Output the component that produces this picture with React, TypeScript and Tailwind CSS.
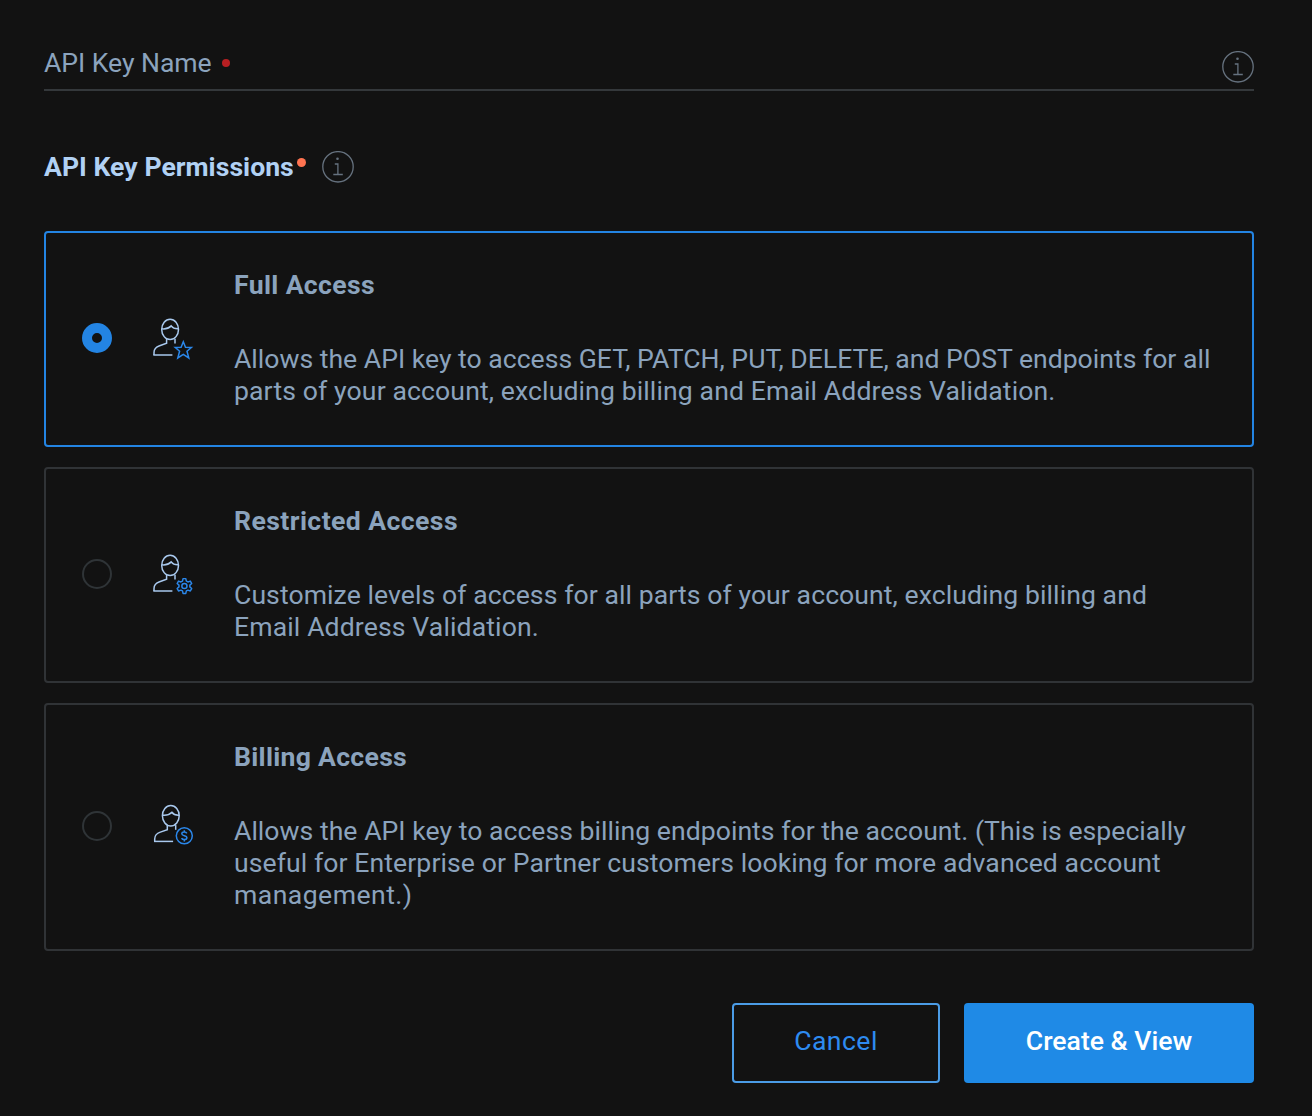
import type { ReactNode } from "react";

function InfoIcon() {
  return (
    <svg className="size-8 shrink-0" viewBox="0 0 32 32" fill="none" stroke="#66727f" strokeWidth="1.3">
      <circle cx="16" cy="15.8" r="15.2" />
      <path d="M12.8 13H15.9V23.4M11.3 23.5H20.8" />
      <circle cx="15.5" cy="7.8" r="1.3" fill="#66727f" stroke="none" />
    </svg>
  );
}

function PersonIcon({ raised, children }: { raised?: boolean; children: ReactNode }) {
  return (
    <svg className="h-[44px] w-[44px] shrink-0" viewBox="0 0 44 44" fill="none" stroke="#a9c9ee" strokeWidth="1.5">
      <g transform={raised ? "translate(0.7 -1.6)" : undefined}>
        <ellipse cx="19.1" cy="13.4" rx="8.4" ry="10.2" />
        <path d="M10.7 12.8C14 13.2 17.5 12.6 20.2 9.9C21.8 12.2 24.2 13 27.5 12.8" />
        <path d="M15.6 22.7V27.2L8.6 29.7C4.7 31 3 33 3 36.5V38.9" />
        <path d="M24 22.7V27.4" />
        <path d="M2.3 39H21.4" />
        {children}
      </g>
    </svg>
  );
}

function StarBadge() {
  return (
    <path
      stroke="#2b87ea"
      strokeWidth="1.5"
      d="M32.3 25.8L34.5 31.2L40.4 31.5L36 35.2L37.8 42L32.3 38.4L26.8 42L28.6 35.2L24.2 31.5L30.1 31.2Z"
    />
  );
}

function GearBadge() {
  return (
    <g stroke="#2b87ea" strokeWidth="1.6" strokeLinejoin="round" transform="translate(2.6 2.8) scale(0.92)">
      <path d="M32 25.9H35L35.6 28.6L37.3 29.5L39.9 28.6L41.4 31.2L39.4 33V34.9L41.4 36.7L39.9 39.3L37.3 38.4L35.6 39.3L35 42H32L31.4 39.3L29.7 38.4L27.1 39.3L25.6 36.7L27.6 34.9V33L25.6 31.2L27.1 28.6L29.7 29.5L31.4 28.6Z" />
      <circle cx="33.5" cy="33.9" r="2.8" />
    </g>
  );
}

function DollarBadge() {
  return (
    <g stroke="#2b87ea" strokeWidth="1.5" transform="translate(0.1 -1.2)">
      <circle cx="32.5" cy="34.6" r="8" />
      <path d="M35 32.2C34.6 31.2 33.8 30.9 32.5 30.9C31 30.9 30 31.5 30 32.6C30 35.2 35.1 33.8 35.1 36.6C35.1 37.8 34 38.4 32.5 38.4C31.1 38.4 30.2 37.9 29.8 36.9M32.5 29V30.9M32.5 38.4V40.2" />
    </g>
  );
}

function Radio({ checked }: { checked?: boolean }) {
  return checked ? (
    <span className="size-[30px] shrink-0 rounded-full border-[10px] border-[#2384e3]" />
  ) : (
    <span className="size-[30px] shrink-0 rounded-full border-2 border-[#2f3437]" />
  );
}

function Option({
  title,
  icon,
  checked,
  children,
}: {
  title: ReactNode;
  icon: ReactNode;
  checked?: boolean;
  children: ReactNode;
}) {
  return (
    <div
      className={`flex rounded-[4px] border-2 pt-9 pr-6 pb-[38px] pl-9 ${
        checked ? "border-[#2384e3]" : "border-[#303336]"
      }`}
    >
      <div className="flex w-[152px] shrink-0 items-center">
        <Radio checked={checked} />
        <div className="ml-[39px]">{icon}</div>
      </div>
      <div className="leading-8 whitespace-nowrap">
        <h2 className="mb-[42px] font-bold">{title}</h2>
        <div className="flex flex-col items-start">{children}</div>
      </div>
    </div>
  );
}

export default function App() {
  return (
    <main className="min-h-[1116px] w-[1312px] bg-[#121212] pt-[47px] pr-[58px] pl-11 font-['Roboto',sans-serif] text-[26.6px] leading-8 text-[#8ba3bd]">
      <div className="flex h-11 items-start justify-between border-b-2 border-[#34383b]">
        <label className="flex items-center">
          <span className="w-[168px] tracking-[-0.05px] whitespace-nowrap">API Key Name</span>
          <span className="ml-[10px] size-2 rounded-full bg-[#b71f22]" />
        </label>
        <div className="pt-1">
          <InfoIcon />
        </div>
      </div>

      <div className="mt-[60px] flex h-8 items-center">
        <h1 className="w-[251px] font-bold tracking-[0.03px] whitespace-nowrap text-[#b1d1f4]">
          API Key Permissions
        </h1>
        <span className="mb-[10px] ml-0.5 size-[9px] rounded-full bg-[#ff7350]" />
        <div className="ml-4">
          <InfoIcon />
        </div>
      </div>

      <div className="mt-12 flex flex-col gap-5">
        <Option
          checked
          title={<span className="tracking-[0.35px]">Full Access</span>}
          icon={<PersonIcon><StarBadge /></PersonIcon>}
        >
          <span className="tracking-normal">
            Allows the API key to access GET, PATCH, PUT, DELETE, and POST endpoints for all
          </span>
          <span className="tracking-[0.11px]">
            parts of your account, excluding billing and Email Address Validation.
          </span>
        </Option>
        <Option
          title={<span className="tracking-[0.42px]">Restricted Access</span>}
          icon={<PersonIcon><GearBadge /></PersonIcon>}
        >
          <span className="tracking-[0.07px]">
            Customize levels of access for all parts of your account, excluding billing and
          </span>
          <span className="tracking-[0.12px]">Email Address Validation.</span>
        </Option>
        <Option
          title={<span className="tracking-[0.28px]">Billing Access</span>}
          icon={<PersonIcon raised><DollarBadge /></PersonIcon>}
        >
          <span className="tracking-[0.03px]">
            Allows the API key to access billing endpoints for the account. (This is especially
          </span>
          <span className="tracking-[0.08px]">
            useful for Enterprise or Partner customers looking for more advanced account
          </span>
          <span className="tracking-[0.45px]">management.)</span>
        </Option>
      </div>

      <div className="mt-[52px] flex justify-end gap-6">
        <button className="h-20 w-52 rounded-[4px] border-2 border-[#4b9ce6] pb-1 tracking-[0.45px] text-[#2e8bf0]">
          Cancel
        </button>
        <button className="h-20 w-[290px] rounded-[4px] bg-[#1f8ae6] pb-1 font-medium text-white">
          Create &amp; View
        </button>
      </div>
    </main>
  );
}
